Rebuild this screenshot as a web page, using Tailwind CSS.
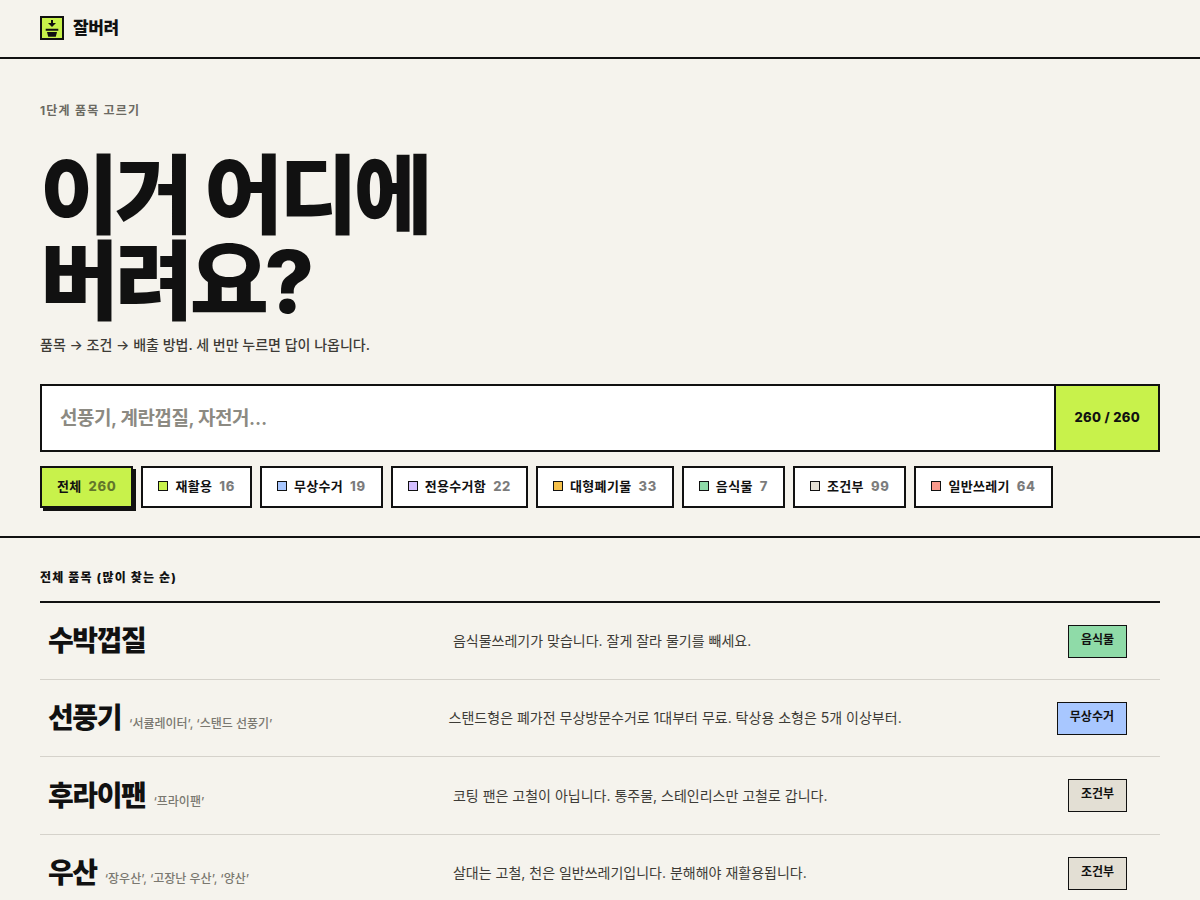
<!DOCTYPE html>
<html lang="ko">
<head>
<meta charset="utf-8">
<meta name="viewport" content="width=device-width, initial-scale=1">
<title>잘버려</title>
<script src="https://cdn.jsdelivr.net/npm/@tailwindcss/browser@4"></script>
</head>
<body class="bg-[#f5f3ed] font-['Inter','Noto_Sans_CJK_KR',sans-serif] text-[#111111]">
<header class="flex h-[59px] items-center border-b-2 border-[#111111] px-10 pb-[1px]">
  <a href="#" class="flex items-center gap-[9px] text-[17px] leading-6 font-extrabold tracking-tight">
    <svg class="size-6" viewBox="0 0 24 24" aria-hidden="true">
      <path fill="#111" d="M0 0h24v24H0z"/>
      <path fill="#c8f24b" d="M2 2h20v20H2z"/>
      <path fill="#111" d="M11 4h2v3h3L12 11 8 7h3zM5.700 12.800h12.600v2H5.700zM7 15.900h10l-1.200 4.900H8.200z"/>
    </svg>
    잘버려
  </a>
</header>
<main>
  <section class="border-b-2 border-[#111111] px-10 pt-[42px] pb-7">
    <p class="text-xs leading-5 font-bold tracking-widest text-[#6b6962]">1단계 품목 고르기</p>
    <h1 class="mt-8 text-[86px] leading-[86px] font-extrabold tracking-tighter">이거 어디에<br>버려요?</h1>
    <p class="mt-2 text-sm leading-6 font-medium text-[#3d3b36]">품목 → 조건 → 배출 방법. 세 번만 누르면 답이 나옵니다.</p>
    <div class="mt-[27px] flex h-[68px] border-2 border-[#111111] bg-white">
      <input type="search" aria-label="품목 검색" placeholder="선풍기, 계란껍질, 자전거…" class="min-w-0 flex-1 px-[18px] pt-0.5 text-[19px] font-semibold tracking-tight outline-none placeholder:text-[#8c8a82]">
      <output class="flex items-center border-l-2 border-[#111111] bg-[#c8f24b] px-[18px] text-[13px] font-extrabold tracking-wide">260 / 260</output>
    </div>
    <div class="mt-[14px] flex flex-wrap gap-2 text-[13px] leading-5 font-bold tracking-wide">
      <button type="button" aria-pressed="true" class="flex h-[42px] items-center gap-[7px] border-2 border-[#111111] bg-[#c8f24b] px-[15px] pb-0.5 shadow-[3px_3px_0_#111111]">전체 <span class="font-extrabold tracking-wider opacity-55">260</span></button>
      <button type="button" class="flex h-[42px] items-center gap-[7px] border-2 border-[#111111] bg-white px-[15px] pb-0.5"><i class="size-[10px] border border-[#111111] bg-[#c8f24b]"></i>재활용 <span class="font-extrabold tracking-wider opacity-55">16</span></button>
      <button type="button" class="flex h-[42px] items-center gap-[7px] border-2 border-[#111111] bg-white px-[15px] pb-0.5"><i class="size-[10px] border border-[#111111] bg-[#a8c7ff]"></i>무상수거 <span class="font-extrabold tracking-wider opacity-55">19</span></button>
      <button type="button" class="flex h-[42px] items-center gap-[7px] border-2 border-[#111111] bg-white px-[15px] pb-0.5"><i class="size-[10px] border border-[#111111] bg-[#d4bfff]"></i>전용수거함 <span class="font-extrabold tracking-wider opacity-55">22</span></button>
      <button type="button" class="flex h-[42px] items-center gap-[7px] border-2 border-[#111111] bg-white px-[15px] pb-0.5"><i class="size-[10px] border border-[#111111] bg-[#f5c04a]"></i>대형폐기물 <span class="font-extrabold tracking-wider opacity-55">33</span></button>
      <button type="button" class="flex h-[42px] items-center gap-[7px] border-2 border-[#111111] bg-white px-[15px] pb-0.5"><i class="size-[10px] border border-[#111111] bg-[#8fdba8]"></i>음식물 <span class="font-extrabold tracking-wider opacity-55">7</span></button>
      <button type="button" class="flex h-[42px] items-center gap-[7px] border-2 border-[#111111] bg-white px-[15px] pb-0.5"><i class="size-[10px] border border-[#111111] bg-[#e3dfd4]"></i>조건부 <span class="font-extrabold tracking-wider opacity-55">99</span></button>
      <button type="button" class="flex h-[42px] items-center gap-[7px] border-2 border-[#111111] bg-white px-[15px] pb-0.5"><i class="size-[10px] border border-[#111111] bg-[#fa9a8c]"></i>일반쓰레기 <span class="font-extrabold tracking-wider opacity-55">64</span></button>
    </div>
  </section>
  <section class="px-10 pt-[30px]">
    <h2 class="border-b-2 border-[#111111] pb-[13px] text-xs leading-5 font-extrabold tracking-widest">전체 품목 (많이 찾는 순)</h2>
    <ul>
      <li><a href="#" class="grid h-[77px] grid-cols-[11fr_17fr_auto] items-center gap-5 border-b border-[#d5d2cb] pr-[33px] pl-2">
        <span class="flex items-baseline gap-2"><b class="text-[28px] leading-9 font-extrabold tracking-tighter">수박껍질</b></span>
        <span class="text-sm text-[#3d3b36]">음식물쓰레기가 맞습니다. 잘게 잘라 물기를 빼세요.</span>
        <span class="border border-[#111111] bg-[#8fdba8] px-3 pt-1 pb-[7px] text-xs leading-5 font-bold">음식물</span>
      </a></li>
      <li><a href="#" class="grid h-[77px] grid-cols-[11fr_17fr_auto] items-center gap-5 border-b border-[#d5d2cb] pr-[33px] pl-2">
        <span class="flex items-baseline gap-2"><b class="text-[28px] leading-9 font-extrabold tracking-tighter">선풍기</b><span class="text-xs font-medium text-[#7a7870]">‘서큘레이터’, ‘스탠드 선풍기’</span></span>
        <span class="text-sm text-[#3d3b36]">스탠드형은 폐가전 무상방문수거로 1대부터 무료. 탁상용 소형은 5개 이상부터.</span>
        <span class="border border-[#111111] bg-[#a8c7ff] px-3 pt-1 pb-[7px] text-xs leading-5 font-bold">무상수거</span>
      </a></li>
      <li><a href="#" class="grid h-[78px] grid-cols-[11fr_17fr_auto] items-center gap-5 border-b border-[#d5d2cb] pr-[33px] pl-2">
        <span class="flex items-baseline gap-2"><b class="text-[28px] leading-9 font-extrabold tracking-tighter">후라이팬</b><span class="text-xs font-medium text-[#7a7870]">‘프라이팬’</span></span>
        <span class="text-sm text-[#3d3b36]">코팅 팬은 고철이 아닙니다. 통주물, 스테인리스만 고철로 갑니다.</span>
        <span class="border border-[#111111] bg-[#e3dfd4] px-3 pt-1 pb-[7px] text-xs leading-5 font-bold">조건부</span>
      </a></li>
      <li><a href="#" class="grid h-[77px] grid-cols-[11fr_17fr_auto] items-center gap-5 border-b border-[#d5d2cb] pr-[33px] pl-2">
        <span class="flex items-baseline gap-2"><b class="text-[28px] leading-9 font-extrabold tracking-tighter">우산</b><span class="text-xs font-medium text-[#7a7870]">‘장우산’, ‘고장난 우산’, ‘양산’</span></span>
        <span class="text-sm text-[#3d3b36]">살대는 고철, 천은 일반쓰레기입니다. 분해해야 재활용됩니다.</span>
        <span class="border border-[#111111] bg-[#e3dfd4] px-3 pt-1 pb-[7px] text-xs leading-5 font-bold">조건부</span>
      </a></li>
    </ul>
  </section>
</main>
</body>
</html>
